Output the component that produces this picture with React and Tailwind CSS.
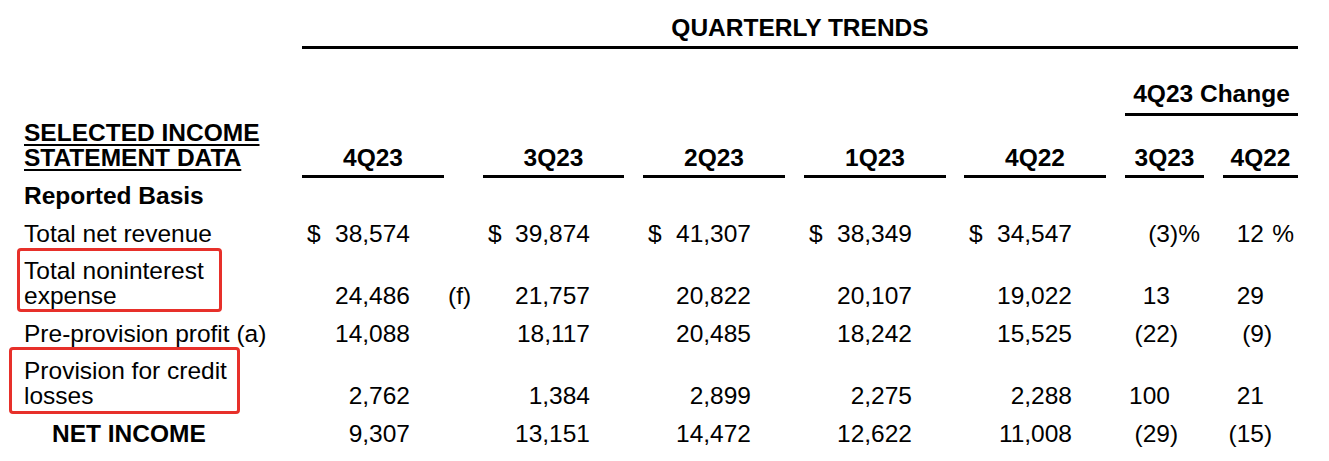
import React from "react";

const rows = [
  {
    label: "Total net revenue",
    dollar: true,
    vals: ["38,574", "39,874", "41,307", "38,349", "34,547"],
    f: "",
    ch1: ["(3", ")%"],
    ch2: ["12", "pct"],
  },
  {
    label: ["Total noninterest", "expense"],
    vals: ["24,486", "21,757", "20,822", "20,107", "19,022"],
    f: "(f)",
    ch1: ["13", ""],
    ch2: ["29", ""],
    box: 1,
  },
  {
    label: "Pre-provision profit (a)",
    vals: ["14,088", "18,117", "20,485", "18,242", "15,525"],
    f: "",
    ch1: ["(22", ")"],
    ch2: ["(9", ")"],
  },
  {
    label: ["Provision for credit", "losses"],
    vals: ["2,762", "1,384", "2,899", "2,275", "2,288"],
    f: "",
    ch1: ["100", ""],
    ch2: ["21", ""],
    box: 2,
  },
  {
    label: "NET INCOME",
    bold: true,
    indent: true,
    vals: ["9,307", "13,151", "14,472", "12,622", "11,008"],
    f: "",
    ch1: ["(29", ")"],
    ch2: ["(15", ")"],
  },
];

function Money({ dollar, v }) {
  return (
    <div className={dollar ? "flex justify-between pl-[5px] pr-[34px]" : "flex justify-end pl-[5px] pr-[34px]"}>
      {dollar ? <span>$</span> : null}
      <span>{v}</span>
    </div>
  );
}

function Suffix({ s }) {
  if (s === "pct") {
    return (
      <span>
        <span className="invisible">)</span>%
      </span>
    );
  }
  return <span>{s}</span>;
}

export default function App() {
  return (
    <div className="w-[1329px] h-[461px] bg-white text-black font-['Liberation_Sans',Arial,sans-serif] text-[24.5px] leading-[25px] overflow-hidden">
      {/* Title */}
      <div className="ml-[302px] w-[996px] pt-[15px] pb-[6px] border-b-[3px] border-black text-center font-bold">
        QUARTERLY TRENDS
      </div>

      {/* Change group header */}
      <div className="ml-[1125px] w-[173px] pt-[32px] pb-[7px] border-b-[3px] border-black text-center font-bold">
        4Q23 Change
      </div>

      {/* Column header row */}
      <div className="flex items-end font-bold">
        <div className="w-[302px] shrink-0 pl-[24px] pt-[4px] pb-[8px] underline decoration-[2px] underline-offset-[3px]">
          SELECTED INCOME
          <br />
          STATEMENT DATA
        </div>
        <div className="w-[142px] shrink-0 text-center pb-[5px] border-b-[3px] border-black">4Q23</div>
        <div className="w-[141px] shrink-0 ml-[39px] text-center pb-[5px] border-b-[3px] border-black">3Q23</div>
        <div className="w-[142px] shrink-0 ml-[19px] text-center pb-[5px] border-b-[3px] border-black">2Q23</div>
        <div className="w-[142px] shrink-0 ml-[19px] text-center pb-[5px] border-b-[3px] border-black">1Q23</div>
        <div className="w-[142px] shrink-0 ml-[18px] text-center pb-[5px] border-b-[3px] border-black">4Q22</div>
        <div className="w-[79px] shrink-0 ml-[19px] text-center pb-[5px] border-b-[3px] border-black">3Q23</div>
        <div className="w-[75px] shrink-0 ml-[19px] text-center pb-[5px] border-b-[3px] border-black">4Q22</div>
      </div>

      {/* Reported Basis */}
      <div className="pl-[24px] pt-[5px] pb-[7.5px] font-bold">Reported Basis</div>

      {rows.map((r, i) => (
        <div key={i} className="flex items-end pt-[5px] pb-[7.5px]">
          <div
            className={
              "relative w-[302px] shrink-0 " +
              (r.indent ? "pl-[52px] " : "pl-[24px] ") +
              (r.bold ? "font-bold" : "")
            }
          >
            {Array.isArray(r.label) ? (
              <>
                {r.label[0]}
                <br />
                {r.label[1]}
              </>
            ) : (
              r.label
            )}
            {r.box === 1 ? (
              <div className="absolute left-[17px] top-[-10px] w-[205px] h-[64px] border-[3px] border-[#e7302a] rounded-[4px]" />
            ) : null}
            {r.box === 2 ? (
              <div className="absolute left-[9px] top-[-11px] w-[231px] h-[67px] border-[3px] border-[#e7302a] rounded-[4px]" />
            ) : null}
          </div>
          <div className="w-[142px] shrink-0">
            <Money dollar={r.dollar} v={r.vals[0]} />
          </div>
          <div className="w-[39px] shrink-0 pl-[4px]">{r.f}</div>
          <div className="w-[141px] shrink-0">
            <Money dollar={r.dollar} v={r.vals[1]} />
          </div>
          <div className="w-[142px] shrink-0 ml-[19px]">
            <Money dollar={r.dollar} v={r.vals[2]} />
          </div>
          <div className="w-[142px] shrink-0 ml-[19px]">
            <Money dollar={r.dollar} v={r.vals[3]} />
          </div>
          <div className="w-[142px] shrink-0 ml-[18px]">
            <Money dollar={r.dollar} v={r.vals[4]} />
          </div>
          <div className="w-[79px] shrink-0 ml-[19px] flex">
            <span className="w-[45px] shrink-0 text-right">{r.ch1[0]}</span>
            <Suffix s={r.ch1[1]} />
          </div>
          <div className="w-[75px] shrink-0 ml-[19px] flex">
            <span className="w-[41px] shrink-0 text-right">{r.ch2[0]}</span>
            <Suffix s={r.ch2[1]} />
          </div>
        </div>
      ))}
    </div>
  );
}
